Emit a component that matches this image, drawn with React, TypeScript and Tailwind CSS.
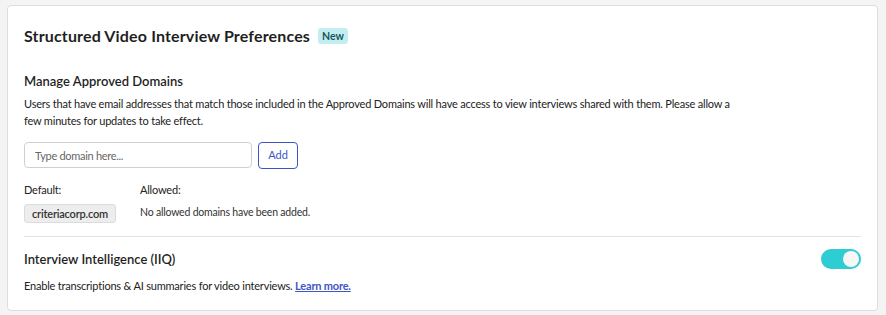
export default function App() {
  return (
    <div className="min-h-[315px] bg-[#f4f4f4] px-[7px] pt-[5px] font-['Lato',sans-serif] text-[#222]">
      <div className="w-[871px] rounded-[4px] border border-[#dedede] bg-white px-4 pb-[16px] pt-[19px]">
        <div className="flex items-center gap-[8px]">
          <h1 className="text-[16px] font-bold leading-[22px] tracking-[0.15px] text-[#1f1f1f]">Structured Video Interview Preferences</h1>
          <span className="rounded-[3px] bg-[#c2eef1] px-[4px] text-[10.5px] font-bold leading-[16px] text-[#19575b]">New</span>
        </div>

        <h2 className="mt-[25px] text-[13px] font-semibold leading-[18px] text-[#1f1f1f]">Manage Approved Domains</h2>
        <p className="mt-[5px] max-w-[716px] text-[11px] leading-[17px] tracking-[-0.2px] text-[#222]">
          Users that have email addresses that match those included in the Approved Domains will have access to view interviews shared with them. Please allow a few minutes for updates to take effect.
        </p>

        <div className="mt-[13px] flex items-start gap-[6px]">
          <input
            className="h-[26px] w-[228px] rounded-[4px] border border-[#cfcfcf] px-[10px] text-[11px] tracking-[-0.3px] text-[#222] outline-none placeholder:text-[#666]"
            placeholder="Type domain here..."
          />
          <button className="h-[27px] w-[40px] rounded-[4px] border border-[#3d55c9] bg-white text-[11px] text-[#3d55c9]">Add</button>
        </div>

        <div className="mt-[13px] flex text-[11px] leading-[16px] tracking-[-0.2px]">
          <div className="w-[116px]">
            <div>Default:</div>
            <div className="mt-[6px] inline-block rounded-[3px] border border-[#dcdcdc] bg-[#ededed] px-[7px] text-[11px] font-semibold leading-[17px] text-[#333]">criteriacorp.com</div>
          </div>
          <div>
            <div>Allowed:</div>
            <div className="mt-[7px] text-[10.5px] leading-[15px] text-[#333]">No allowed domains have been added.</div>
          </div>
        </div>

        <div className="mt-[13px] border-t border-[#e2e2e2]" />

        <div className="mt-[12px] flex items-center justify-between">
          <h2 className="text-[13px] font-semibold leading-[20px] text-[#1f1f1f]">Interview Intelligence (IIQ)</h2>
          <div className="flex h-[20px] w-[40px] items-center justify-end rounded-full bg-[#2ecdd3] pr-[2px]">
            <div className="h-[16px] w-[16px] rounded-full bg-[#f7f7f7]" />
          </div>
        </div>
        <p className="mt-[8px] text-[11px] leading-[17px] tracking-[-0.2px] text-[#222]">
          Enable transcriptions &amp; AI summaries for video interviews.{' '}
          <a href="#" className="font-bold text-[#4256c4] underline">Learn more.</a>
        </p>
      </div>
    </div>
  );
}
